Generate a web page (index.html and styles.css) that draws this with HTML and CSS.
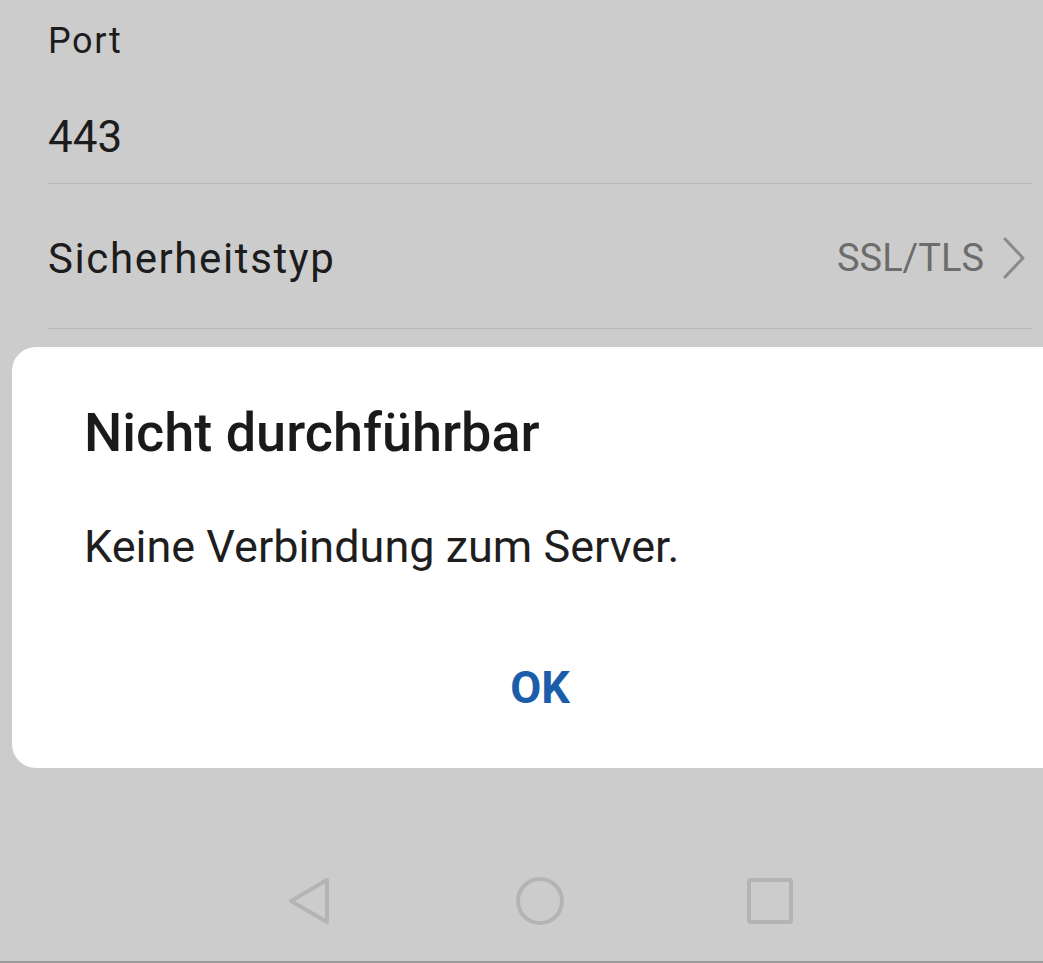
FILE: index.html
```html
<!DOCTYPE html>
<html lang="de">
<head>
    <meta charset="UTF-8">
    <meta name="viewport" content="width=device-width, initial-scale=1.0">
    <title>Nicht durchführbar</title>
    <link rel="stylesheet" href="styles.css">
</head>
<body>
    <div class="screen">
        <div class="settings">
            <div class="field">
                <div class="field-label">Port</div>
                <div class="field-input">443</div>
            </div>
            <div class="row">
                <span class="row-title">Sicherheitstyp</span>
                <span class="row-value">
                    SSL/TLS
                    <svg class="chevron" width="24" height="42" viewBox="0 0 24 42">
                        <polyline points="3,2 21,21 3,40" fill="none" stroke="#8a8a8a" stroke-width="3" stroke-linecap="round" stroke-linejoin="round"/>
                    </svg>
                </span>
            </div>
        </div>

        <div class="nav">
            <svg class="nav-icon" width="48" height="48" viewBox="0 0 48 48">
                <polygon points="5,24 41,3 41,45" fill="none" stroke="#b4b4b4" stroke-width="4" stroke-linejoin="round"/>
            </svg>
            <svg class="nav-icon" width="48" height="48" viewBox="0 0 48 48">
                <circle cx="24" cy="24" r="22" fill="none" stroke="#b4b4b4" stroke-width="4"/>
            </svg>
            <svg class="nav-icon" width="48" height="48" viewBox="0 0 48 48">
                <rect x="3" y="3" width="42" height="42" rx="2" fill="none" stroke="#b4b4b4" stroke-width="4"/>
            </svg>
        </div>

        <!-- dialog sits over the dimmed settings page -->
        <div class="dialog">
            <div class="dialog-title">Nicht durchführbar</div>
            <div class="dialog-message">Keine Verbindung zum Server.</div>
            <div class="dialog-actions">
                <button class="dialog-button">OK</button>
            </div>
        </div>
    </div>
</body>
</html>
```

FILE: styles.css
```css
body {
    margin: 0;
    background-color: #cccccc;
    font-family: Roboto, "Noto Sans", sans-serif;
    color: #1c1c1c;
    overflow: hidden;
}

.screen {
    position: relative;
    height: 963px;
    display: flex;
    flex-direction: column;
}

.settings {
    flex: 1;
    padding: 0 11px 0 48px;
}

.field {
    border-bottom: 1px solid #b9b9b9;
}

.field-label {
    font-size: 36px;
    letter-spacing: 1.6px;
    line-height: 82px;
}

.field-input {
    font-size: 44px;
    line-height: 92px;
    padding-top: 9px;
}

.row {
    display: flex;
    align-items: center;
    justify-content: space-between;
    height: 140px;
    padding-top: 4px;
    border-bottom: 1px solid #b9b9b9;
}

.row-title {
    font-size: 42px;
    letter-spacing: 1.6px;
}

.row-value {
    display: flex;
    align-items: center;
    gap: 18px;
    font-size: 38px;
    color: #6c6c6c;
    padding-right: 6px;
}

.chevron {
    display: block;
}

.nav {
    display: flex;
    align-items: center;
    gap: 182px;
    height: 120px;
    padding-left: 286px;
    border-bottom: 2px solid #9a9a9a;
}

.nav-icon {
    display: block;
}

.dialog {
    position: absolute;
    left: 12px;
    top: 347px;
    width: 1056px;
    height: 421px;
    box-sizing: border-box;
    background-color: #ffffff;
    border-radius: 24px;
    padding: 51px 72px 0 72px;
}

.dialog-title {
    font-size: 54px;
    font-weight: 500;
    line-height: 70px;
    color: #1a1a1a;
}

.dialog-message {
    font-size: 45px;
    line-height: 60px;
    margin-top: 49px;
    color: #1e1e1e;
}

.dialog-actions {
    display: flex;
    justify-content: center;
    margin-top: 81px;
    margin-left: -72px;
    margin-right: -72px;
}

.dialog-button {
    background: none;
    border: none;
    padding: 0;
    font-family: inherit;
    font-size: 45px;
    font-weight: 700;
    line-height: 60px;
    color: #1a5ea9;
    cursor: pointer;
}
```
